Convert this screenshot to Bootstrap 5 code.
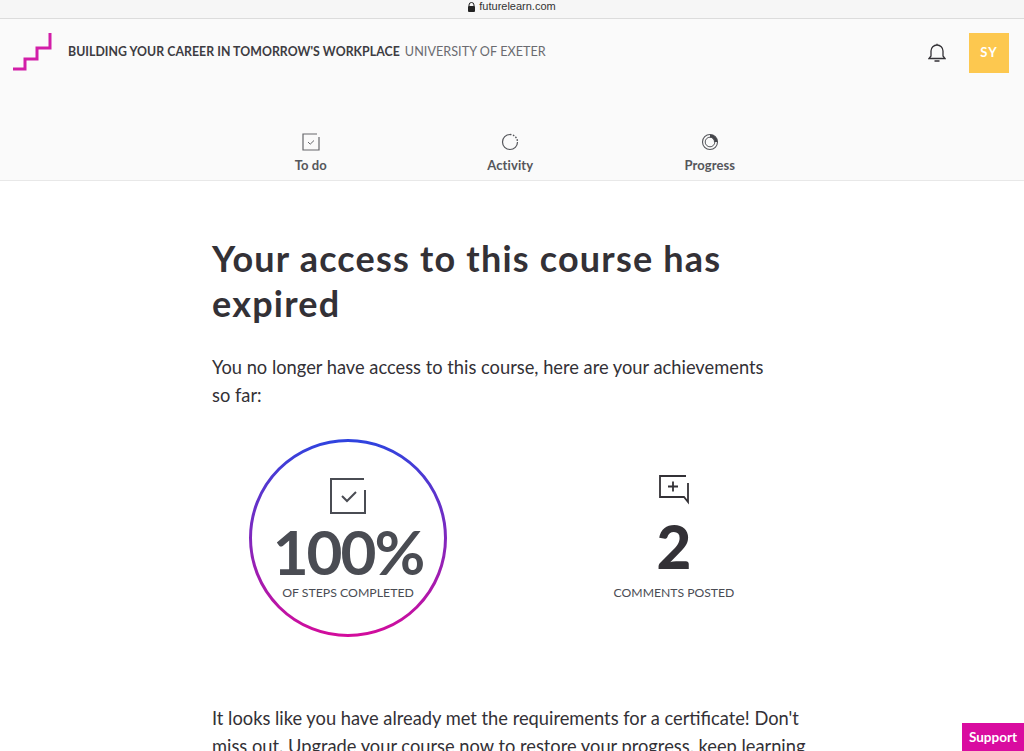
<!DOCTYPE html>
<html lang="en">
<head>
    <meta charset="UTF-8">
    <meta name="viewport" content="width=device-width, initial-scale=1.0">
    <title>FutureLearn</title>
    <link href="https://cdn.jsdelivr.net/npm/bootstrap@5.3.0/dist/css/bootstrap.min.css" rel="stylesheet">
    <style>
        html, body { height: 751px; overflow: hidden; }
        body { font-family: "Lato", "Liberation Sans", sans-serif; color: #333136; background: #fff; }
        .url-bar { height: 19px; background: #f6f6f6; border-bottom: 1px solid #dcdcdc; font: 11px/13px "Liberation Sans", sans-serif; color: #333; }
        .site-head { background: #fafafa; border-bottom: 1px solid #e8e8e8; height: 162px; }
        .head-top { height: 67px; padding: 14px 15px 0 13px; }
        .course-name { font-size: 12.3px; font-weight: 700; color: #3d3c42; margin-left: 15px; margin-top: 10px; letter-spacing: .05px; }
        .course-uni { font-weight: 400; color: #6a6b70; margin-left: 2px; font-size: 12.6px; }
        .avatar { width: 40px; height: 40px; background: #fdc84f; color: #fff; font-size: 13px; font-weight: 700; letter-spacing: 1px; }
        .tabs { margin: 47px 0 0 211px; width: 600px; }
        .tab-item { width: 199.5px; font-size: 13px; font-weight: 700; color: #55565b; line-height: 16px; letter-spacing: .1px; }
        .tab-item svg { display: block; margin-bottom: 6px; }
        .page-body { width: 600px; margin-left: 212px; padding-top: 55px; }
        .big-title { font-size: 36px; line-height: 45px; font-weight: 700; color: #333136; margin: 0 0 27px; letter-spacing: 1.2px; }
        .intro-text { font-size: 18.3px; line-height: 28px; color: #333136; margin: 0; width: 570px; }
        .stats { margin-top: 30px; height: 198px; }
        .ring { width: 198px; height: 198px; margin-left: 37px; }
        .ring-svg { top: 0; left: 0; }
        .ring-inner { padding-top: 39px; }
        .num-pct { font-size: 62px; line-height: 64px; font-weight: 700; color: #4a4c53; margin-top: 5px; letter-spacing: -2px; }
        .stat-label { font-size: 12.3px; line-height: 16px; color: #4a4c53; margin-top: 2px; }
        .comment-stat { width: 200px; margin-left: 127px; padding-top: 36px; }
        .num-two { font-size: 60px; line-height: 62px; font-weight: 900; color: #333136; margin-top: 10px; }
        .comment-label { font-size: 12.2px; line-height: 16px; color: #4a4c53; margin-top: 8px; }
        .after-text { font-size: 18.3px; line-height: 28px; color: #333136; margin: 67px 0 0; width: 600px; }
        .support-btn { position: fixed; right: 0; bottom: 0; width: 62px; height: 28px; background: #d90ca0; color: #fff; font-size: 13.5px; font-weight: 700; line-height: 28px; text-align: center; }
    </style>
</head>
<body>
    <div class="url-bar d-flex justify-content-center align-items-start">
        <div class="d-flex align-items-center gap-1">
            <svg width="7" height="10" viewBox="0 0 7 10"><path d="M1 4.500V3a2.500 2.500 0 0 1 5 0v1.500" fill="none" stroke="#222" stroke-width="1"/><rect x="0" y="4" width="7" height="6" rx="1" fill="#222"/></svg>
            <span>futurelearn.com</span>
        </div>
    </div>

    <div class="site-head">
        <div class="head-top d-flex align-items-start">
            <svg width="40" height="40" viewBox="0 0 40 40" class="flex-shrink-0">
                <path d="M0 36H12V26H24V15H37V0" fill="none" stroke="#d21ea8" stroke-width="3"/>
            </svg>
            <div class="course-name">BUILDING YOUR CAREER IN TOMORROW'S WORKPLACE <span class="course-uni">UNIVERSITY OF EXETER</span></div>
            <div class="ms-auto d-flex align-items-center" style="gap:23px">
                <svg width="18" height="20" viewBox="0 0 18 20">
                    <path d="M1 15.500h16l-2-2.500V8a6 6 0 0 0-12 0v5zM9 2V.8M6.500 18h5" fill="none" stroke="#333136" stroke-width="1.300"/>
                </svg>
                <div class="avatar d-flex align-items-center justify-content-center">SY</div>
            </div>
        </div>
        <div class="tabs d-flex">
            <div class="tab-item d-flex flex-column align-items-center">
                <svg width="18" height="18" viewBox="0 0 18 18"><path d="M15 1H1V17H17V4" fill="none" stroke="#66676b" stroke-width="1.200"/><path d="M6 9l2.200 2.200L12 7.500" fill="none" stroke="#66676b" stroke-width="1"/></svg>
                <span>To do</span>
            </div>
            <div class="tab-item d-flex flex-column align-items-center">
                <svg width="18" height="18" viewBox="0 0 18 18"><path d="M9 1.500A7.500 7.500 0 1 0 16.500 9" fill="none" stroke="#55565b" stroke-width="1.200"/><path d="M9 1.500A7.500 7.500 0 0 1 16.500 9" fill="none" stroke="#55565b" stroke-width="1.400" stroke-dasharray="1.500 1.500"/></svg>
                <span>Activity</span>
            </div>
            <div class="tab-item d-flex flex-column align-items-center">
                <svg width="18" height="18" viewBox="0 0 18 18"><circle cx="9" cy="9" r="7.500" fill="none" stroke="#55565b" stroke-width="1.100"/><path d="M9 1.500A7.500 7.500 0 0 1 16.500 9H13A4.500 4.500 0 0 0 9 4.500z" fill="#44454a"/><circle cx="9" cy="9" r="4.800" fill="none" stroke="#55565b" stroke-width="1"/></svg>
                <span>Progress</span>
            </div>
        </div>
    </div>

    <div class="page-body">
        <h1 class="big-title">Your access to this course has expired</h1>
        <p class="intro-text">You no longer have access to this course, here are your achievements so far:</p>

        <div class="stats d-flex">
            <div class="ring position-relative flex-shrink-0">
                <svg class="ring-svg position-absolute" width="198" height="198" viewBox="0 0 198 198">
                    <defs>
                        <linearGradient id="ringGrad" x1="0" y1="0" x2="0" y2="1">
                            <stop offset="0" stop-color="#2f43df"/>
                            <stop offset="1" stop-color="#d20c9c"/>
                        </linearGradient>
                    </defs>
                    <circle cx="99" cy="99" r="97.500" fill="none" stroke="url(#ringGrad)" stroke-width="3"/>
                </svg>
                <div class="ring-inner d-flex flex-column align-items-center text-center position-relative">
                    <svg width="36" height="36" viewBox="0 0 36 36"><path d="M34 1H1V35H35V12" fill="none" stroke="#4a4c53" stroke-width="2"/><path d="M12 18l5 5 9-9" fill="none" stroke="#4a4c53" stroke-width="2"/></svg>
                    <div class="num-pct">100%</div>
                    <div class="stat-label">OF STEPS COMPLETED</div>
                </div>
            </div>
            <div class="comment-stat d-flex flex-column align-items-center text-center flex-shrink-0">
                <svg width="30" height="30" viewBox="0 0 30 30"><path d="M27 1H1V22H25L29 27V8" fill="none" stroke="#333136" stroke-width="1.800"/><path d="M9 11.500H19M14 6.500V16.500" fill="none" stroke="#333136" stroke-width="1.800"/></svg>
                <div class="num-two">2</div>
                <div class="comment-label">COMMENTS POSTED</div>
            </div>
        </div>

        <p class="after-text">It looks like you have already met the requirements for a certificate! Don't miss out. Upgrade your course now to restore your progress, keep learning</p>
    </div>

    <div class="support-btn">Support</div>

    <script src="https://cdn.jsdelivr.net/npm/bootstrap@5.3.0/dist/js/bootstrap.bundle.min.js"></script>
</body>
</html>
